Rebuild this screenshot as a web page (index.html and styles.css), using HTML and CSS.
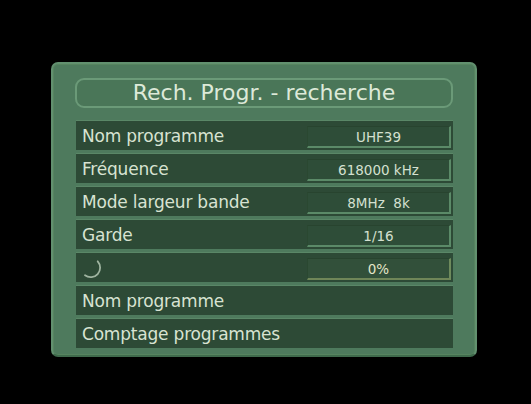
FILE: index.html
```html
<!DOCTYPE html>
<html>
<head>
<meta charset="utf-8">
<link rel="stylesheet" href="styles.css">
</head>
<body>
<div class="screen">
  <div class="panel">
    <div class="title">Rech. Progr. - recherche</div>
    <div class="rows">
      <div class="row"><span class="label">Nom programme</span><span class="value">UHF39</span></div>
      <div class="row"><span class="label">Fréquence</span><span class="value">618000 kHz</span></div>
      <div class="row"><span class="label">Mode largeur bande</span><span class="value">8MHz&nbsp;&nbsp;8k</span></div>
      <div class="row"><span class="label">Garde</span><span class="value">1/16</span></div>
      <div class="row">
        <span class="label spin"><svg width="24" height="24" viewBox="0 0 24 24"><path d="M18.7 5.3 A9.5 9.5 0 0 1 6 19.3" fill="none" stroke="#9fb4a0" stroke-width="1.8" stroke-linecap="round"/></svg></span>
        <span class="value progress">0%</span>
      </div>
      <div class="row"><span class="label">Nom programme</span></div>
      <div class="row"><span class="label">Comptage programmes</span></div>
    </div>
  </div>
</div>
</body>
</html>
```
FILE: styles.css
```css
html, body {
  margin: 0;
  padding: 0;
  background: #000;
}
.screen {
  width: 531px;
  height: 404px;
  background: #000;
  padding: 62px 0 0 51px;
  box-sizing: border-box;
  font-family: "DejaVu Sans", "Liberation Sans", sans-serif;
}
.panel {
  width: 426px;
  height: 295px;
  box-sizing: border-box;
  background: #4e7a5d;
  border-radius: 7px;
  border: 2px solid #62906f;
  border-bottom-color: #3f6a4c;
  box-shadow: inset 0 0 0 1px #56845f;
  padding: 14px 22px 0 23px;
}
.title {
  height: 30px;
  margin: 0 0 0 -1px;
  box-sizing: border-box;
  border: 2px solid #6b9a78;
  border-radius: 9px;
  background: #4a7658;
  color: #dde9d8;
  font-size: 22px;
  line-height: 26px;
  text-align: center;
}
.rows {
  margin-top: 12px;
  display: flex;
  flex-direction: column;
  gap: 3px;
}
.row {
  height: 30px;
  box-sizing: border-box;
  background: #2d4a36;
  border-top: 1px solid #5a8767;
  display: flex;
  align-items: center;
  justify-content: space-between;
  padding: 0 2px 0 6px;
}
.label {
  color: #d8e3d2;
  font-size: 17px;
  letter-spacing: -0.2px;
}
.spin {
  display: flex;
  align-items: center;
  margin-left: -3px;
}
.value {
  width: 144px;
  height: 22px;
  box-sizing: border-box;
  margin-top: 2px;
  background: #2e4d38;
  border-top: 1px solid #28442f;
  border-left: 1px solid #2a4831;
  border-right: 2px solid #5b8a68;
  border-bottom: 2px solid #5b8a68;
  color: #d4e0d0;
  font-size: 13.5px;
  line-height: 20px;
  text-align: center;
}
.progress {
  border-right-color: #6e8a5c;
  border-bottom-color: #6f8658;
  color: #e4e6c8;
  background: #32503a;
}
```
